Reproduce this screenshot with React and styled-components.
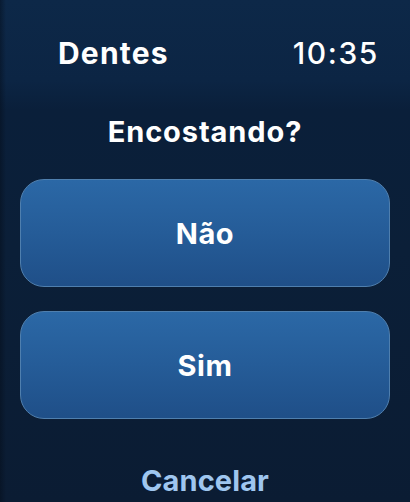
import React from "react";
import styled, { createGlobalStyle } from "styled-components";

const Global = createGlobalStyle`
  html, body { margin: 0; padding: 0; background: #0b1d35; }
  * { box-sizing: border-box; }
`;

const Screen = styled.div`
  width: 410px;
  height: 502px;
  overflow: hidden;
  display: flex;
  flex-direction: column;
  font-family: Inter, "Noto Sans", sans-serif;
  color: #ffffff;
  background:
    linear-gradient(90deg, rgba(4, 12, 24, 0.45) 0px, rgba(4, 12, 24, 0) 6px),
    linear-gradient(180deg, #0d2848 0%, #0c2544 16%, #0a1f3a 22%, #0b1f38 50%, #0b1c33 100%);
`;

const Header = styled.div`
  display: flex;
  justify-content: space-between;
  align-items: center;
  padding: 35px 32px 0 58px;
  height: 71px;
  font-size: 30px;
  line-height: 36px;
`;

const AppName = styled.span`
  font-weight: 700;
  letter-spacing: 1.2px;
`;

const Clock = styled.span`
  font-weight: 500;
  letter-spacing: 1.6px;
  margin-right: -1px;
`;

const Title = styled.h1`
  margin: 43px 0 0;
  text-align: center;
  font-size: 29px;
  line-height: 36px;
  font-weight: 700;
  letter-spacing: 0.9px;
`;

const Buttons = styled.div`
  display: flex;
  flex-direction: column;
  gap: 24px;
  margin: 29px 20px 0;
`;

const Choice = styled.button`
  height: 108px;
  border-radius: 24px;
  border: 1px solid #4f7fae;
  background: linear-gradient(180deg, #2b68a6 0%, #255c98 50%, #1f4f88 100%);
  color: #ffffff;
  font-family: inherit;
  font-size: 29px;
  font-weight: 700;
  letter-spacing: 0.6px;
  display: flex;
  align-items: center;
  justify-content: center;
  padding: 0;
`;

const Cancel = styled.div`
  margin-top: 44px;
  text-align: center;
  font-size: 29px;
  line-height: 36px;
  font-weight: 700;
  color: #9fc6ef;
  letter-spacing: 0.1px;
`;

export default function App() {
  return (
    <>
      <Global />
      <Screen>
        <Header>
          <AppName>Dentes</AppName>
          <Clock>10:35</Clock>
        </Header>
        <Title>Encostando?</Title>
        <Buttons>
          <Choice>Não</Choice>
          <Choice>Sim</Choice>
        </Buttons>
        <Cancel>Cancelar</Cancel>
      </Screen>
    </>
  );
}
